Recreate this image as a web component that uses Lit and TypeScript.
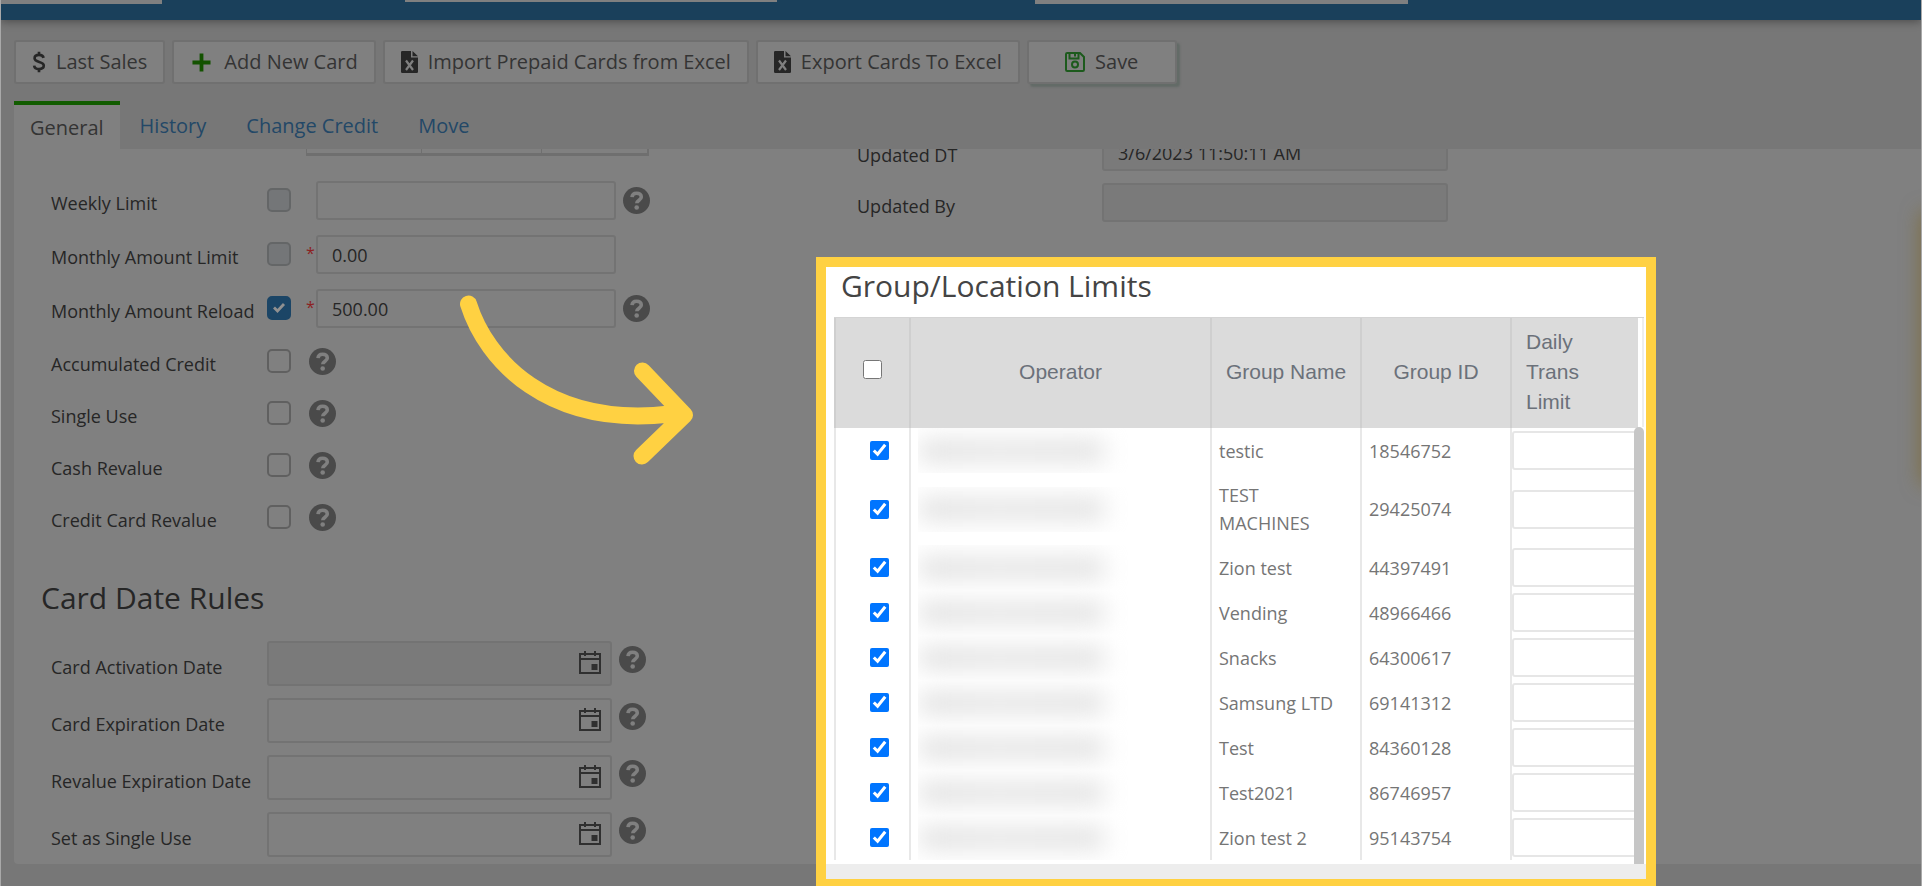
import { LitElement, html, css } from "lit";
import { customElement } from "lit/decorators.js";

const ROWS: [string, string][] = [
  ["testic", "18546752"],
  ["TEST MACHINES", "29425074"],
  ["Zion test", "44397491"],
  ["Vending", "48966466"],
  ["Snacks", "64300617"],
  ["Samsung LTD", "69141312"],
  ["Test", "84360128"],
  ["Test2021", "86746957"],
  ["Zion test 2", "95143754"],
];

const LIMITS = [
  { id: "weekly", label: "Weekly Limit", value: "", on: false, locked: true, star: false, help: true },
  { id: "mlimit", label: "Monthly Amount Limit", value: "0.00", on: false, locked: true, star: true, help: false },
  { id: "mreload", label: "Monthly Amount Reload", value: "500.00", on: true, locked: false, star: true, help: true },
];
const TOGGLES = ["Accumulated Credit", "Single Use", "Cash Revalue", "Credit Card Revalue"];
const DATES = ["Card Activation Date", "Card Expiration Date", "Revalue Expiration Date", "Set as Single Use"];

const dollar = html`<svg class="ico dollar" viewBox="0 0 14 24" aria-hidden="true"><path d="M12 7.500C11.500 5.300 9.500 4.300 7 4.300 4 4.300 2.200 5.800 2.200 7.900c0 5.200 10 2.800 10 8C12.200 18.300 10 19.700 7 19.700c-3 0-5-1.400-5.300-3.800M7 .8v4M7 19.200v4" fill="none" stroke="currentColor" stroke-width="2.900"/></svg>`;
const plus = html`<svg class="ico plus" viewBox="0 0 20 20" aria-hidden="true"><path d="M10 .5v19M.5 10h19" stroke="currentColor" stroke-width="4" fill="none"/></svg>`;
const excel = html`<svg class="ico excel" viewBox="0 0 17 22" aria-hidden="true"><path d="M1.200 0H10v6.500h7V20.800A1.200 1.200 0 0 1 15.800 22H1.200A1.200 1.200 0 0 1 0 20.800V1.200A1.200 1.200 0 0 1 1.200 0ZM11.500 0 17 5.200h-5.500Z" fill="currentColor"/><path d="m5 9.500 7 9.500M12 9.500 5 19" stroke="#808080" stroke-width="2.200"/></svg>`;
const disk = html`<svg class="ico disk" viewBox="0 0 20 20" aria-hidden="true"><path d="M1 2.200A1.200 1.200 0 0 1 2.200 1H15l4 4v12.800a1.200 1.200 0 0 1-1.200 1.200H2.200A1.200 1.200 0 0 1 1 17.800ZM4.500 1v5.500h9V1M10 1v3.500" fill="none" stroke="currentColor" stroke-width="2"/><circle cx="10" cy="12.500" r="3" fill="none" stroke="currentColor" stroke-width="2"/></svg>`;
const help = html`<svg class="help" viewBox="0 0 27 27" aria-hidden="true"><circle cx="13.500" cy="13.500" r="13.500" fill="#4a4a4a"/><path d="M9 10.200C9.200 7.500 11 6.200 13.600 6.200c2.700 0 4.700 1.500 4.700 3.800 0 3.200-4.500 3.200-4.500 6.300" fill="none" stroke="#808080" stroke-width="3.600"/><circle cx="13.700" cy="20.500" r="2.300" fill="#808080"/></svg>`;
const calendar = html`<svg class="cal" viewBox="0 0 22 24" aria-hidden="true"><path d="M1 4h20v19H1ZM1 9h20M6 1v5M16 1v5" fill="none" stroke="currentColor" stroke-width="2"/><path d="M12.500 14h6v6h-6z" fill="currentColor"/></svg>`;

@customElement("app-root")
export class AppRoot extends LitElement {
  static styles = css`
    * { box-sizing: border-box; }
    :host {
      display: block; position: relative; min-height: 100vh; overflow: hidden;
      background: #777; color: #262626;
      border: solid #a9a9a9; border-width: 0 1px;
      font: 18px/26px "Open Sans", "Noto Sans", sans-serif;
    }
    button, input { font: inherit; color: inherit; margin: 0; }
    .topbar { display: flex; align-items: flex-start; height: 20px; background: #1a405b; box-shadow: 0 2px 8px rgba(0, 0, 0, .35); }
    .slot { height: 4px; background: #808080; width: 161px; }
    .slot.mid { height: 2px; width: 372px; margin-left: 243px; }
    .slot.end { width: 373px; margin-left: 258px; }
    .actions { display: flex; gap: 7px; padding: 20px 13px 0; }
    .btn {
      height: 44px; display: flex; align-items: center; justify-content: center; gap: 10px;
      padding: 0 16px; border: 2px solid #707070; border-radius: 3px; background: #808080;
      color: #343434; font-size: 20px; white-space: nowrap;
    }
    .btn.save { width: 150px; box-shadow: 3px 3px 2px #636b67; }
    .ico { flex: none; display: block; color: #262626; }
    .dollar { width: 14px; height: 22px; }
    .plus { width: 19px; height: 19px; margin: 0 3px 0 2px; color: #135200; }
    .excel { width: 17px; height: 22px; }
    .disk { width: 20px; height: 20px; color: #1c5a1c; }
    .tabs { display: flex; align-items: flex-end; padding: 17px 13px 0; height: 65px; }
    .tab {
      height: 44px; padding: 0 20px; color: #234867; text-decoration: none;
      font-size: 20px; line-height: 42px;
    }
    .tab.on { height: 48px; padding: 0 16px; border-top: 4px solid #115c00; background: #808080; color: #343434; line-height: 46px; }
    .panel {
      margin-left: 13px; height: calc(100vh - 171px); overflow: hidden; background: #808080;
      border-radius: 0 0 0 4px; display: grid; grid-template-columns: 843px 1fr; align-items: start;
    }
    .stub { display: grid; grid-template-columns: 114px 120px 1fr; width: 343px; height: 7px; margin-left: 292px; border: solid #6f6f6f; border-width: 0 2px 3px 1px; }
    .stub i + i { border-left: 1px solid #6f6f6f; }
    label { white-space: nowrap; padding-top: 6px; }
    .row { display: grid; grid-template-columns: 216px 49px 300px auto; align-items: center; height: 54px; padding-left: 37px; }
    .limits { padding-top: 17px; }
    .row.toggle { grid-template-columns: 216px 42px auto; height: 52px; }
    .check {
      appearance: none; width: 24px; height: 24px; border: 2px solid #606060; border-radius: 5px;
      background: #808080; display: block;
    }
    .check:disabled { background: #747678; border-color: #646667; }
    .check:checked {
      border-color: #1b4566;
      background: #1b4566 url("data:image/svg+xml,%3Csvg xmlns='http://www.w3.org/2000/svg' viewBox='0 0 20 20'%3E%3Cpath d='M5 9.500 8.500 13 15 6' fill='none' stroke='%23909090' stroke-width='2.800'/%3E%3C/svg%3E");
    }
    .field { position: relative; }
    .field input, .ro input {
      display: block; width: 100%; height: 39px; padding: 2px 14px 0; background: transparent;
      border: 2px solid #737373; border-radius: 3px; outline: none;
    }
    .star { position: absolute; left: -10px; top: 8px; color: #8c1f1f; font-size: 16px; line-height: 20px; }
    .help { width: 27px; height: 27px; display: block; margin-left: 7px; }
    .toggle .help { margin-left: 0; }
    h2 { margin: 0; font-weight: 400; font-size: 30px; line-height: 40px; white-space: nowrap; }
    .dates h2 { padding: 35px 0 17px 27px; }
    .date { display: grid; grid-template-columns: 216px 345px auto; height: 57px; padding-left: 37px; align-items: center; }
    .date .field input { height: 45px; }
    .date .help { margin-bottom: 8px; }
    .date:first-of-type input, .ro input { background: #7a7a7a; }
    .cal { position: absolute; right: 11px; top: 9px; width: 22px; height: 24px; color: #303030; }
    .ro { display: grid; grid-template-columns: 245px 346px; align-items: center; height: 51px; }
    .meta { margin-top: -23px; }

    .glow { position: absolute; right: -24px; top: 212px; width: 24px; height: 272px; box-shadow: 0 0 20px rgba(125, 95, 10, .55); }
    .arrow { position: absolute; left: 439px; top: 280px; width: 270px; height: 200px; pointer-events: none; }
    .pop {
      position: absolute; left: 815px; top: 257px; width: 840px; bottom: -3px;
      border: 10px solid #ffd142; background: #fff; overflow: hidden; color: #444;
    }
    .pop h2 { padding: 3px 0 0 15px; height: 50px; line-height: 32px; }
    .scroller { position: relative; margin: 0 2px 0 8px; height: 547px; overflow: hidden; border-top: 1px solid #d4d4d4; }
    table { border-collapse: separate; border-spacing: 0; table-layout: fixed; width: 804px; }
    th {
      background: #dbdbdb; height: 110px; padding: 0 12px 2px; border-left: 2px solid #cfcfcf; color: #6b717a;
      font: 21px/30px "Liberation Sans", Arial, sans-serif; text-align: center;
    }
    th:last-child { text-align: left; padding: 0 50px 2px 14px; }
    td { height: 45px; padding: 0 8px 0 7px; border-left: 2px solid #e8e8e8; color: #757575; line-height: 28px; vertical-align: middle; }
    tr.tall td { height: 72px; }
    td:first-child { padding-left: 34px; }
    td:last-child { padding: 0; }
    td:last-child input { display: block; width: 130px; height: 39px; border: 2px solid #e6e6e6; border-radius: 3px; background: #fff; }
    th input, td .pick { display: block; width: 19px; height: 19px; accent-color: #0075ff; }
    th input { margin: 0 0 6px 15px; }
    .c1 { width: 75px; } .c2 { width: 301px; } .c3 { width: 150px; } .c4 { width: 150px; }
    .smear { height: 45px; width: 210px; overflow: hidden; display: flex; align-items: center; padding-left: 2px; }
    .smear i { display: block; width: 184px; height: 20px; background: linear-gradient(90deg, #dcdcdc, #e2e2e2 40%, #dedede); filter: blur(12px); }
    .bar { position: absolute; right: 0; top: 109px; bottom: 0; width: 10px; background: #c6c6c6; border-radius: 5px 5px 0 0; }
    .gutter { position: absolute; right: 0; top: 0; height: 109px; width: 5px; background: #fff; border-right: 2px solid #eee; }
    .foot { height: 15px; background: #ededed; }
  `;

  render() {
    return html`
      <header class="topbar"><span class="slot"></span><span class="slot mid"></span><span class="slot end"></span></header>
      <div class="actions">
        <button class="btn">${dollar}Last Sales</button>
        <button class="btn">${plus}Add New Card</button>
        <button class="btn">${excel}Import Prepaid Cards from Excel</button>
        <button class="btn">${excel}Export Cards To Excel</button>
        <button class="btn save">${disk}Save</button>
      </div>
      <nav class="tabs">
        <a class="tab on" href="#general">General</a>
        <a class="tab" href="#history">History</a>
        <a class="tab" href="#credit">Change Credit</a>
        <a class="tab" href="#move">Move</a>
      </nav>
      <main class="panel">
        <section>
          <div class="stub"><i></i><i></i><i></i></div>
          <div class="limits">
            ${LIMITS.map((r) => html`<div class="row">
              <label for=${r.id}>${r.label}</label>
              <input class="check" type="checkbox" aria-label="Enable ${r.label}" ?checked=${r.on} ?disabled=${r.locked} />
              <div class="field">${r.star ? html`<span class="star">*</span>` : ""}<input id=${r.id} type="text" .value=${r.value} /></div>
              ${r.help ? help : ""}
            </div>`)}
            ${TOGGLES.map((t, i) => html`<div class="row toggle">
              <label for="toggle${i}">${t}</label><input id="toggle${i}" class="check" type="checkbox" />${help}
            </div>`)}
          </div>
          <section class="dates">
            <h2>Card Date Rules</h2>
            ${DATES.map((t, i) => html`<div class="date">
              <label for="date${i}">${t}</label>
              <div class="field"><input id="date${i}" type="text" />${calendar}</div>${help}
            </div>`)}
          </section>
        </section>
        <section class="meta">
          <div class="ro"><label for="udt">Updated DT</label><input id="udt" readonly value="3/6/2023 11:50:11 AM" /></div>
          <div class="ro"><label for="uby">Updated By</label><input id="uby" readonly value="" /></div>
        </section>
      </main>
      <div class="glow"></div>
      <svg class="arrow" viewBox="440 280 270 200" aria-hidden="true">
        <path d="M468.500 304C486 360 548 428 670 414M642.500 371 684.500 415 642 456" fill="none" stroke="#ffd142" stroke-width="17" stroke-linecap="round" stroke-linejoin="round"/>
      </svg>
      <section class="pop">
        <h2>Group/Location Limits</h2>
        <div class="scroller">
          <table>
            <colgroup><col class="c1" /><col class="c2" /><col class="c3" /><col class="c4" /><col /></colgroup>
            <thead><tr>
              <th><input type="checkbox" aria-label="Select all" /></th>
              <th>Operator</th><th>Group Name</th><th>Group ID</th><th>Daily Trans Limit</th>
            </tr></thead>
            <tbody>
              ${ROWS.map(([name, id], i) => html`<tr class=${i === 1 ? "tall" : ""}>
                <td><input class="pick" type="checkbox" checked aria-label="Select ${name}" /></td>
                <td><div class="smear"><i></i></div></td>
                <td>${name}</td><td>${id}</td>
                <td><input type="text" aria-label="Daily limit for ${name}" /></td>
              </tr>`)}
            </tbody>
          </table>
          <div class="gutter"></div><div class="bar"></div>
        </div>
        <div class="foot"></div>
      </section>
    `;
  }
}
